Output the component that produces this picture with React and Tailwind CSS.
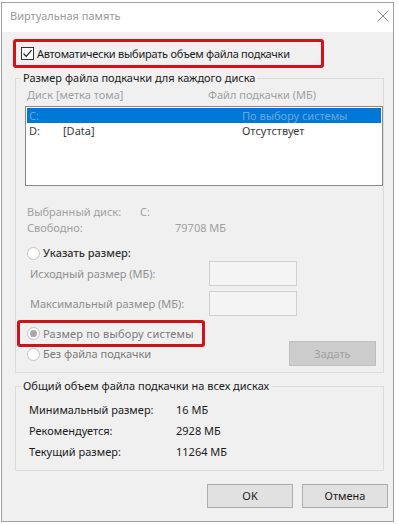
import React from "react";

const Radio = ({ checked }) => (
    <span className="w-[13px] h-[13px] rounded-full border border-[#c4c4c4] bg-white flex items-center justify-center shrink-0">
        {checked && <span className="w-[7px] h-[7px] rounded-full bg-[#a8a8a8]" />}
    </span>
);

const GroupBox = ({ title, className, children }) => (
    <fieldset className={`border border-[#dcdcdc] ml-[13px] w-[369px] ${className}`}>
        <legend className="ml-[5px] px-[2px] h-[16px] leading-[16px] text-[#1a1a1a]">{title}</legend>
        {children}
    </fieldset>
);

const StatRow = ({ label, value }) => (
    <div className="flex items-center h-[21px] pl-[13px]">
        <span className="w-[147px]">{label}</span>
        <span>{value}</span>
    </div>
);

export default function App() {
    return (
        <div
            className="w-[399px] h-[524px] bg-white pt-[2px] pl-[1px] text-[11px] leading-[16px] text-[#1a1a1a] whitespace-nowrap"
            style={{ fontFamily: '"Noto Sans", "Open Sans", sans-serif' }}
        >
            <div className="w-[393px] h-[520px] border border-[#a0a0a0] bg-[#f0f0f0] flex flex-col">
                {/* title bar */}
                <div className="h-[29px] bg-white flex justify-between items-start pl-[8px] pr-[4px]">
                    <span className="mt-[5px] text-[#9a9a9a]">Виртуальная память</span>
                    <svg className="mt-[7px]" width="12" height="12" viewBox="0 0 12 12">
                        <path d="M0.5 0.5 L11.5 11.5 M11.5 0.5 L0.5 11.5" stroke="#8a8a8a" strokeWidth="1" fill="none" />
                    </svg>
                </div>

                {/* auto checkbox */}
                <div className="mt-[7px] ml-[11px] w-[311px] h-[29px] border-[3px] border-[#d0121b] rounded-[3px] flex items-center pl-[5px]">
                    <span className="w-[13px] h-[13px] border border-[#333] bg-white flex items-center justify-center">
                        <svg width="11" height="11" viewBox="0 0 11 11">
                            <path d="M1.5 5.5 L4.2 8.3 L9.6 2.2" stroke="#222" strokeWidth="1.2" fill="none" />
                        </svg>
                    </span>
                    <span className="ml-[3px] tracking-[-0.25px]">Автоматически выбирать объем файла подкачки</span>
                </div>

                {/* per-disk group */}
                <GroupBox title="Размер файла подкачки для каждого диска" className="mt-[2px] pb-[6px]">
                    <div className="flex mt-[1px] pl-[11px] text-[#a0a0a0]">
                        <span className="w-[181px]">Диск [метка тома]</span>
                        <span>Файл подкачки (МБ)</span>
                    </div>
                    <div className="mt-[3px] ml-[9px] w-[358px] h-[80px] border border-[#8a8a8a] bg-white p-[1px]">
                        <div className="flex h-[15px] leading-[15px] bg-[#0078d7] text-[#6ea6db] pl-[2px]">
                            <span className="w-[34px]">C:</span>
                            <span className="w-[179px]"></span>
                            <span>По выбору системы</span>
                        </div>
                        <div className="flex h-[16px] leading-[16px] text-[#3a3a3a] pl-[2px]">
                            <span className="w-[34px]">D:</span>
                            <span className="w-[179px]">[Data]</span>
                            <span>Отсутствует</span>
                        </div>
                    </div>

                    <div className="mt-[18px] pl-[11px] text-[#a0a0a0]">
                        <div className="flex">
                            <span className="w-[113px]">Выбранный диск:</span>
                            <span>C:</span>
                        </div>
                        <div className="flex">
                            <span className="w-[148px]">Свободно:</span>
                            <span>79708 МБ</span>
                        </div>
                    </div>

                    <div className="mt-[9px] pl-[11px] flex items-center gap-[3px] text-[#333] font-medium">
                        <Radio />
                        <span>Указать размер:</span>
                    </div>
                    <div className="flex items-center pl-[14px] text-[#8f8f8f]">
                        <span className="w-[179px]">Исходный размер (МБ):</span>
                        <span className="w-[88px] h-[25px] border border-[#d0d0d0] bg-[#f4f4f4]" />
                    </div>
                    <div className="flex items-center pl-[14px] mt-[5px] text-[#8f8f8f]">
                        <span className="w-[179px]">Максимальный размер (МБ):</span>
                        <span className="w-[88px] h-[25px] border border-[#d0d0d0] bg-[#f4f4f4]" />
                    </div>

                    <div className="flex justify-between mt-[4px]">
                        <div className="flex flex-col text-[#7a7a7a]">
                            <div className="ml-[1px] w-[188px] h-[27px] border-[3px] border-[#d0121b] rounded-[3px] flex items-center pl-[7px] gap-[3px]">
                                <Radio checked />
                                <span className="tracking-[0.2px]">Размер по выбору системы</span>
                            </div>
                            <div className="h-[14px] pl-[11px] flex items-center gap-[3px]">
                                <Radio />
                                <span>Без файла подкачки</span>
                            </div>
                        </div>
                        <button className="mt-[21px] mr-[7px] w-[87px] h-[25px] bg-[#cccccc] border border-[#bfbfbf] text-[#a0a0a0]">
                            Задать
                        </button>
                    </div>
                </GroupBox>

                {/* totals group */}
                <GroupBox title="Общий объем файла подкачки на всех дисках" className="mt-[5px] pb-[8px]">
                    <div className="mt-[5px]">
                        <StatRow label="Минимальный размер:" value="16 МБ" />
                        <StatRow label="Рекомендуется:" value="2928 МБ" />
                        <StatRow label="Текущий размер:" value="11264 МБ" />
                    </div>
                </GroupBox>

                <div className="flex justify-end gap-[9px] mt-[13px] mr-[5px]">
                    <button className="w-[86px] h-[24px] bg-[#e1e1e1] border border-[#adadad]">OK</button>
                    <button className="w-[86px] h-[24px] bg-[#e1e1e1] border border-[#adadad]">Отмена</button>
                </div>
            </div>
        </div>
    );
}
